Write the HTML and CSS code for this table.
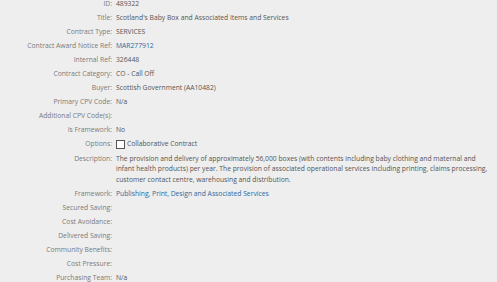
FILE: index.html
```html
<!DOCTYPE html>
<html lang="en">
<head>
<meta charset="utf-8">
<title>Contract details</title>
<link rel="stylesheet" href="styles.css">
</head>
<body>
<dl class="details">
  <dt>ID:</dt><dd>489322</dd>
  <dt>Title:</dt><dd>Scotland's Baby Box and Associated Items and Services</dd>
  <dt>Contract Type:</dt><dd>SERVICES</dd>
  <dt>Contract Award Notice Ref:</dt><dd><a href="#" class="link">MAR277912</a></dd>
  <dt>Internal Ref:</dt><dd>326448</dd>
  <dt>Contract Category:</dt><dd>CO - Call Off</dd>
  <dt>Buyer:</dt><dd>Scottish Government (AA10482)</dd>
  <dt>Primary CPV Code:</dt><dd>N/a</dd>
  <dt>Additional CPV Code(s):</dt><dd></dd>
  <dt>Is Framework:</dt><dd>No</dd>
  <dt>Options:</dt><dd class="option"><span class="checkbox"></span>Collaborative Contract</dd>
  <dt>Description:</dt><dd>The provision and delivery of approximately 56,000 boxes (with contents including baby clothing and maternal and infant health products) per year. The provision of associated operational services including printing, claims processing, customer contact centre, warehousing and distribution.</dd>
  <dt>Framework:</dt><dd><a href="#" class="link">Publishing, Print, Design and Associated Services</a></dd>
  <dt>Secured Saving:</dt><dd></dd>
  <dt>Cost Avoidance:</dt><dd></dd>
  <dt>Delivered Saving:</dt><dd></dd>
  <dt>Community Benefits:</dt><dd></dd>
  <dt>Cost Pressure:</dt><dd></dd>
  <dt>Purchasing Team:</dt><dd>N/a</dd>
</dl>
</body>
</html>
```
FILE: styles.css
```css
html, body {
  margin: 0;
  padding: 0;
  background: #eeeeee;
}
body {
  font-family: "Open Sans", "Noto Sans", "Liberation Sans", sans-serif;
  font-size: 6.75px;
  line-height: 10.6px;
  color: #555555;
}
.details {
  display: grid;
  grid-template-columns: 112px 1fr;
  column-gap: 4px;
  row-gap: 3.5px;
  margin: -1.5px 6px 0 0;
}
.details dt {
  text-align: right;
  color: #7a7a7a;
  white-space: nowrap;
}
.details dd {
  margin: 0;
  min-height: 10.6px;
}
.link {
  color: #2a6aa3;
  text-decoration: none;
}
.details .option {
  display: flex;
  align-items: center;
  gap: 2px;
  height: 10.6px;
}
.checkbox {
  flex: none;
  width: 7px;
  height: 7px;
  border: 1px solid #555555;
  background: #ffffff;
}
```
